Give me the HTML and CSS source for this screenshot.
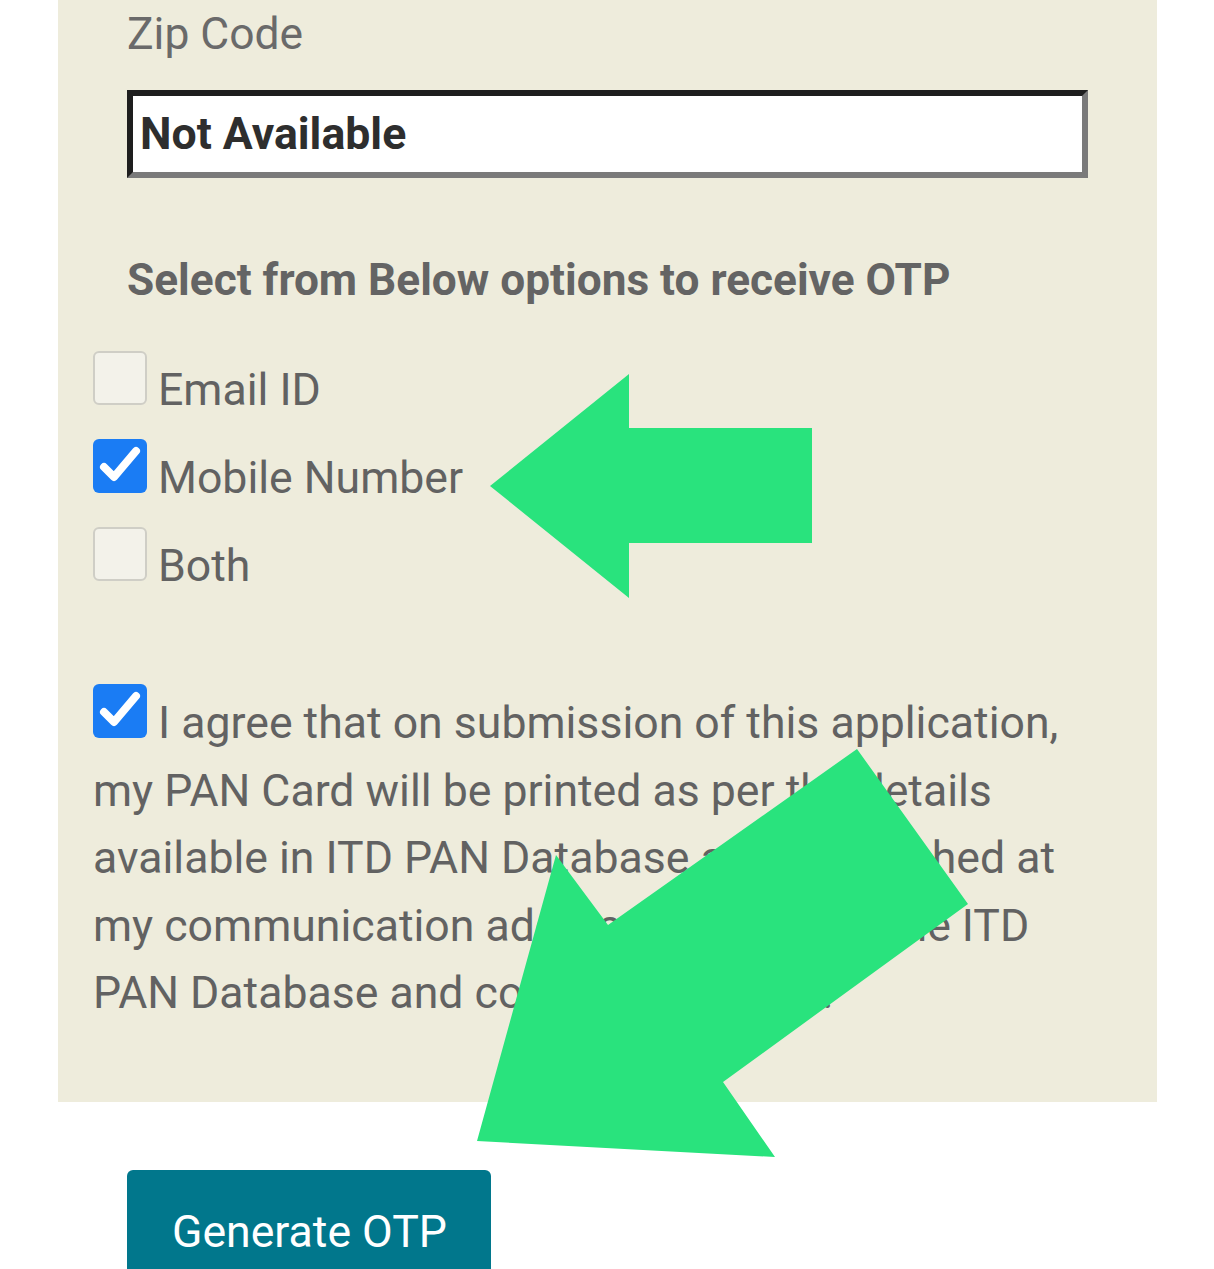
FILE: index.html
```html
<!DOCTYPE html>
<html lang="en">
<head>
<meta charset="utf-8">
<title>Generate OTP</title>
<link rel="stylesheet" href="styles.css">
</head>
<body>
<div class="page">
  <section class="panel">
    <div class="field">
      <div class="field-label">Zip Code</div>
      <div class="field-input">Not Available</div>
      <div class="section-title">Select from Below options to receive OTP</div>
    </div>
    <ul class="options">
      <li class="option"><span class="box"></span><span class="option-text">Email ID</span></li>
      <li class="option"><span class="box checked"><svg viewBox="0 0 54 54"><polyline points="11,28 21,38 43,12" /></svg></span><span class="option-text">Mobile Number</span></li>
      <li class="option"><span class="box"></span><span class="option-text">Both</span></li>
    </ul>
    <p class="agree"><span class="box checked"><svg viewBox="0 0 54 54"><polyline points="11,28 21,38 43,12" /></svg></span> I agree that on submission of this application, my PAN Card will be printed as per the details available in ITD PAN Database and dispatched at my communication address available in the ITD PAN Database and confirm the same.</p>
  </section>
  <div class="actions">
    <button class="btn" type="button">Generate OTP</button>
  </div>
  <svg class="annotations" viewBox="0 0 1214 1269" width="1214" height="1269">
    <polygon points="490,486 629,374 629,428 812,428 812,543 629,543 629,598" />
    <polygon points="477,1141 556,855 608,925 857,749 968,904 723,1082 775,1157" />
  </svg>
</div>
</body>
</html>
```

FILE: styles.css
```css
html, body {
  margin: 0;
  padding: 0;
  background: #ffffff;
}

body {
  font-family: Roboto, "Noto Sans", "Liberation Sans", sans-serif;
  color: #626262;
  overflow: hidden;
}

.page {
  position: relative;
  width: 1214px;
  height: 1269px;
  overflow: hidden;
}

.panel {
  margin-left: 58px;
  width: 1099px;
  box-sizing: border-box;
  background: #eeecdc;
  padding: 8px 69px 74px 35px;
}

.field {
  padding-left: 34px;
}

.field-label {
  font-size: 44.4px;
  line-height: 52px;
  color: #6a6a6a;
}

.field-input {
  margin-top: 30px;
  height: 88px;
  box-sizing: border-box;
  border-style: solid;
  border-width: 6px;
  border-color: #1e1e1e #7a7a7a #7a7a7a #1e1e1e;
  background: #ffffff;
  padding-left: 7px;
  display: flex;
  align-items: center;
  font-size: 44.6px;
  font-weight: 700;
  color: #2e2e2e;
}

.section-title {
  margin-top: 76px;
  font-size: 44.2px;
  line-height: 52px;
  font-weight: 700;
  color: #646464;
}

.options {
  list-style: none;
  margin: 45px 0 0;
  padding: 0;
  display: flex;
  flex-direction: column;
  gap: 23px;
}

.option {
  display: flex;
  align-items: baseline;
  gap: 11px;
  font-size: 44.6px;
  line-height: 52px;
}

.box {
  display: inline-block;
  width: 54px;
  height: 54px;
  box-sizing: border-box;
  border: 2px solid #cfcec6;
  border-radius: 6px;
  background: #f3f2ea;
  flex-shrink: 0;
}

.box.checked {
  border: none;
  background: #1a7cf4;
}

.box svg {
  display: block;
  width: 54px;
  height: 54px;
}

.box polyline {
  fill: none;
  stroke: #ffffff;
  stroke-width: 8;
  stroke-linecap: round;
  stroke-linejoin: round;
}

.agree {
  margin: 92px 0 0;
  font-size: 44.6px;
  line-height: 67.5px;
}

.agree .box {
  vertical-align: baseline;
}

.actions {
  padding: 68px 0 0 127px;
}

.btn {
  font-family: Roboto, "Noto Sans", "Liberation Sans", sans-serif;
  font-size: 44.6px;
  line-height: 52px;
  color: #ffffff;
  background: #01778c;
  border: none;
  border-radius: 6px;
  padding: 36px 44px 36px 45px;
  cursor: pointer;
}

.annotations {
  position: absolute;
  left: 0;
  top: 0;
  pointer-events: none;
}

.annotations polygon {
  fill: #29e37d;
}
```
